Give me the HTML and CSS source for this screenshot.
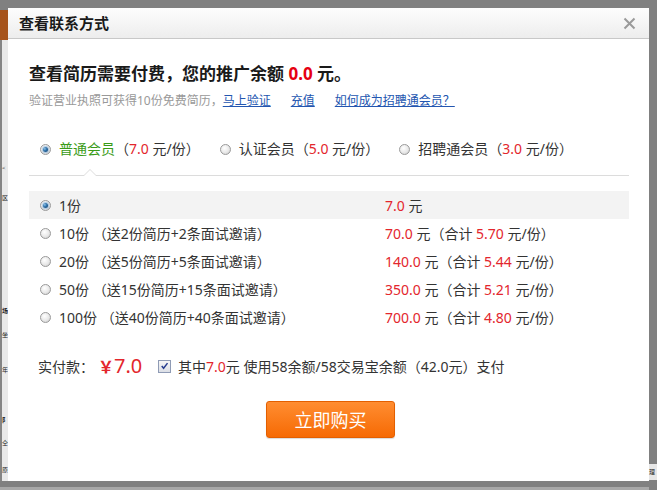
FILE: index.html
```html
<!DOCTYPE html>
<html lang="zh-CN">
<head>
<meta charset="utf-8">
<title>查看联系方式</title>
<link rel="stylesheet" href="styles.css">
</head>
<body>
<div class="side-left">
  <div class="page-orange"></div>
  <div class="page-light">
    <span class="pc c1">&lt;</span>
    <span class="pc c2">区</span>
    <span class="pc c3 b">场</span>
    <span class="pc c4">坐</span>
    <span class="pc c5">年</span>
    <span class="pc c6 b">阝</span>
    <span class="pc c7">仝</span>
    <span class="pc c8">原</span>
  </div>
</div>

<div class="dialog">
  <div class="dlg-head">
    <span class="dlg-title">查看联系方式</span>
    <svg class="dlg-close" width="13" height="13" viewBox="0 0 13 13"><path d="M1.5 1.5 L11.5 11.5 M11.5 1.5 L1.5 11.5" stroke="#9a9a9a" stroke-width="2" fill="none"/></svg>
  </div>
  <div class="dlg-body">
    <h2 class="headline">查看简历需要付费，您的推广余额 <span class="hl-red">0.0</span> 元。</h2>
    <p class="subline">验证营业执照可获得10份免费简历，<a class="lnk">马上验证</a><a class="lnk">充值</a><a class="lnk">如何成为招聘通会员？</a></p>

    <div class="members">
      <label class="member"><span class="radio checked"></span><span class="m-text"><span class="green">普通会员</span>（<span class="red">7.0</span> 元/份）</span></label>
      <label class="member"><span class="radio"></span><span class="m-text">认证会员（<span class="red">5.0</span> 元/份）</span></label>
      <label class="member"><span class="radio"></span><span class="m-text">招聘通会员（<span class="red">3.0</span> 元/份）</span></label>
      <span class="notch"></span>
    </div>

    <ul class="options">
      <li class="opt active"><span class="radio checked"></span><span class="opt-label">1份</span><span class="opt-price"><span class="red">7.0</span> 元</span></li>
      <li class="opt"><span class="radio"></span><span class="opt-label">10份 （送2份简历+2条面试邀请）</span><span class="opt-price"><span class="red">70.0</span> 元（合计 <span class="red">5.70</span> 元/份）</span></li>
      <li class="opt"><span class="radio"></span><span class="opt-label">20份 （送5份简历+5条面试邀请）</span><span class="opt-price"><span class="red">140.0</span> 元（合计 <span class="red">5.44</span> 元/份）</span></li>
      <li class="opt"><span class="radio"></span><span class="opt-label">50份 （送15份简历+15条面试邀请）</span><span class="opt-price"><span class="red">350.0</span> 元（合计 <span class="red">5.21</span> 元/份）</span></li>
      <li class="opt"><span class="radio"></span><span class="opt-label">100份 （送40份简历+40条面试邀请）</span><span class="opt-price"><span class="red">700.0</span> 元（合计 <span class="red">4.80</span> 元/份）</span></li>
    </ul>

    <div class="pay">
      <span class="pay-label">实付款：</span>
      <span class="pay-amount"><b class="yen">￥</b>7.0</span>
      <span class="checkbox"><svg width="12" height="12" viewBox="0 0 12 12"><path d="M3 6 L5 8.5 L9.3 2.8" stroke="#273d8f" stroke-width="1.6" fill="none"/></svg></span>
      <span class="pay-note">其中<span class="red">7.0</span>元 使用58余额/58交易宝余额（42.0元）支付</span>
    </div>

    <div class="actions">
      <button class="buy">立即购买</button>
    </div>
  </div>
</div>

<div class="side-right">
  <div class="page-light-r"><span class="pc-r">理</span></div>
</div>
<div class="bottom-strip"></div>
</body>
</html>
```

FILE: styles.css
```css
* { box-sizing: border-box; }
html, body { margin: 0; padding: 0; }
body {
  width: 657px;
  height: 490px;
  overflow: hidden;
  background: #808080;
  display: grid;
  grid-template-columns: 8px 641px 8px;
  grid-template-rows: 8px 473px 9px;
  font-family: "Noto Sans", "Noto Sans CJK SC", sans-serif;
  color: #333;
}

/* page behind the overlay */
.side-left {
  grid-column: 1;
  grid-row: 2;
  display: flex;
  flex-direction: column;
  overflow: hidden;
}
.page-orange {
  margin-top: 2px;
  height: 30px;
  background: #a6541c;
}
.page-light {
  flex: 1;
  border-left: 2px solid #858585;
  background: #e9e9e9;
  display: flex;
  flex-direction: column;
  font-size: 6px;
  line-height: 8px;
  color: #222;
}
.pc { display: block; }
.pc.b { font-weight: bold; }
.c1 { margin-top: 124px; }
.c2 { margin-top: 22px; }
.c3 { margin-top: 105px; }
.c4 { margin-top: 16px; }
.c5 { margin-top: 27px; }
.c6 { margin-top: 42px; }
.c7 { margin-top: 15px; }
.c8 { margin-top: 19px; }

.side-right {
  grid-column: 3;
  grid-row: 2 / 4;
  display: flex;
  flex-direction: column;
  justify-content: flex-end;
  padding-bottom: 10px;
}
.page-light-r {
  height: 16px;
  background: #e6e6e6;
  font-size: 6px;
  line-height: 16px;
  color: #222;
}
.pc-r { display: block; }

.bottom-strip {
  grid-column: 1 / 3;
  grid-row: 3;
  border-bottom: 3px solid #a8a8a8;
}

/* dialog */
.dialog {
  grid-column: 2;
  grid-row: 2;
  background: #fff;
  display: flex;
  flex-direction: column;
}
.dlg-head {
  height: 31px;
  border-bottom: 1px solid #c8c8c8;
  background: linear-gradient(#fdfdfd, #ededed);
  display: flex;
  align-items: center;
  justify-content: space-between;
  padding: 0 13px 0 11px;
}
.dlg-title {
  font-size: 15px;
  font-weight: bold;
  color: #1a1a1a;
  line-height: 30px;
}
.dlg-close { display: block; }

.dlg-body {
  padding: 0 20px 0 21px;
}
.headline {
  margin: 24px 0 0;
  font-size: 17px;
  line-height: 22px;
  font-weight: bold;
  color: #1a1a1a;
}
.hl-red { color: #e60012; }
.subline {
  margin: 7px 0 0;
  font-size: 12px;
  line-height: 18px;
  color: #999;
}
.lnk {
  color: #2356b0;
  text-decoration: underline;
  margin-right: 20px;
  cursor: pointer;
}

.members {
  position: relative;
  margin-top: 29px;
  padding: 0 0 16px 11px;
  border-bottom: 1px solid #dcdcdc;
  display: flex;
  align-items: center;
  font-size: 14px;
  line-height: 20px;
  color: #333;
}
.member {
  display: flex;
  align-items: center;
  margin-right: 20px;
  white-space: nowrap;
}
.m-text { margin-left: 8px; white-space: pre; }
.green { color: #3a9b17; }
.red { color: #e3262d; }
.notch {
  position: absolute;
  left: 54px;
  bottom: -1px;
  width: 0;
  height: 0;
  border-left: 7px solid transparent;
  border-right: 7px solid transparent;
  border-bottom: 7px solid #dcdcdc;
}
.notch::after {
  content: "";
  position: absolute;
  left: -6px;
  top: 1px;
  border-left: 6px solid transparent;
  border-right: 6px solid transparent;
  border-bottom: 6px solid #fff;
}

.radio {
  display: inline-block;
  flex: none;
  width: 11px;
  height: 11px;
  border-radius: 50%;
  border: 1px solid #9a9a9a;
  background: radial-gradient(circle at 40% 35%, #ffffff 0%, #e8e8e8 55%, #c6c6c6 100%);
  position: relative;
}
.radio.checked::after {
  content: "";
  position: absolute;
  left: 2px;
  top: 2px;
  width: 5px;
  height: 5px;
  border-radius: 50%;
  background: radial-gradient(circle at 35% 35%, #8cc3ea 0%, #2a6da6 45%, #153d66 100%);
  box-shadow: 0 0 1px 1px rgba(120,170,215,0.6);
}

.options {
  list-style: none;
  margin: 15px 0 0;
  padding: 0;
  font-size: 14px;
  color: #333;
}
.opt {
  height: 28px;
  display: flex;
  align-items: center;
  padding-left: 11px;
  white-space: nowrap;
}
.opt.active { background: #f3f3f3; }
.opt-label {
  margin-left: 8px;
  width: 326px;
}

.pay {
  margin-top: 23px;
  height: 24px;
  display: flex;
  align-items: center;
  padding-left: 9px;
  font-size: 14px;
  color: #333;
  white-space: nowrap;
}
.pay-label { width: 60px; }
.pay-amount {
  color: #e3262d;
  font-size: 20px;
  width: 60px;
  line-height: 24px;
}
.yen { font-weight: bold; font-size: 16px; }
.checkbox {
  width: 13px;
  height: 13px;
  border: 1px solid #8f9bb5;
  background: linear-gradient(#f6f6f6, #dcdfe6);
  display: flex;
  align-items: center;
  justify-content: center;
  margin-right: 7px;
}
.checkbox svg { display: block; }

.actions {
  margin-top: 23px;
  display: flex;
  justify-content: center;
  padding-left: 3px;
}
.buy {
  width: 129px;
  height: 37px;
  border: 1px solid #e35f00;
  border-radius: 3px;
  background: linear-gradient(#ff8d31, #f66a04);
  color: #fff;
  font-family: "Noto Sans CJK SC", sans-serif;
  font-size: 18px;
  line-height: 35px;
  padding: 0;
  cursor: pointer;
  box-shadow: 0 1px 1px rgba(0,0,0,0.15);
}
```
